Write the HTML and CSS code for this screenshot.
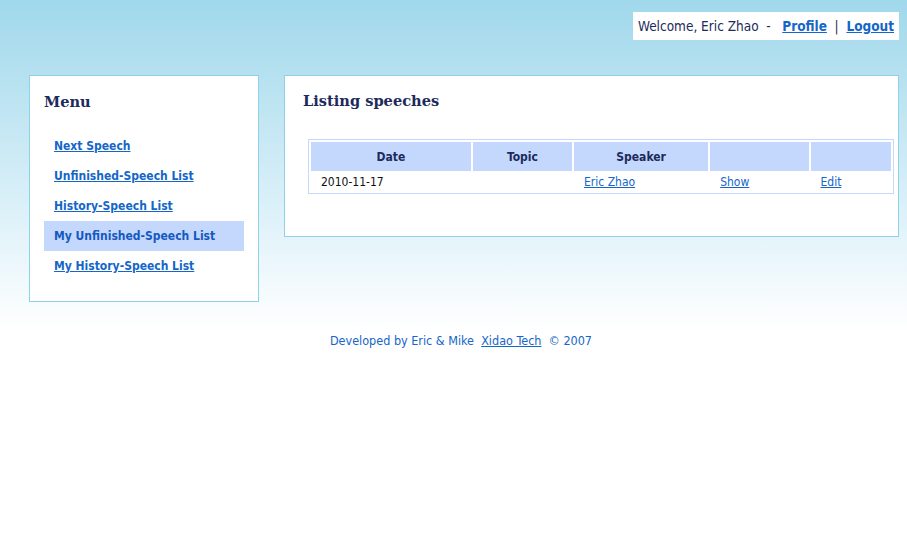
FILE: index.html
```html
<!DOCTYPE html>
<html>
<head>
<meta charset="utf-8">
<title>Listing speeches</title>
<link rel="stylesheet" href="styles.css">
</head>
<body>
<div class="page">
  <div class="topbar">
    <div class="userbox">Welcome, Eric Zhao &nbsp;-&nbsp; &nbsp;<a href="#">Profile</a>&nbsp; | &nbsp;<a href="#">Logout</a></div>
  </div>
  <div class="content">
    <div class="sidebar">
      <h2 class="box-title">Menu</h2>
      <ul class="menu">
        <li><a href="#">Next Speech</a></li>
        <li><a href="#">Unfinished-Speech List</a></li>
        <li><a href="#">History-Speech List</a></li>
        <li class="active"><a href="#">My Unfinished-Speech List</a></li>
        <li><a href="#">My History-Speech List</a></li>
      </ul>
    </div>
    <div class="main">
      <h2 class="box-title">Listing speeches</h2>
      <table class="list">
        <thead>
          <tr><th class="c1">Date</th><th class="c2">Topic</th><th class="c3">Speaker</th><th class="c4"></th><th class="c5"></th></tr>
        </thead>
        <tbody>
          <tr><td>2010-11-17</td><td></td><td><a href="#">Eric Zhao</a></td><td><a href="#">Show</a></td><td><a href="#">Edit</a></td></tr>
        </tbody>
      </table>
    </div>
  </div>
  <div class="footer">Developed by Eric &amp; Mike &nbsp;<a href="#">Xidao Tech</a> &nbsp;© 2007</div>
</div>
</body>
</html>
```
FILE: styles.css
```css
html, body {
  margin: 0;
  padding: 0;
}
body {
  background: #fff linear-gradient(to bottom, #a0d8eb 0px, #dff2f9 220px, #ffffff 330px) no-repeat;
  min-height: 557px;
  font-family: "DejaVu Sans Condensed", "DejaVu Sans", sans-serif;
  font-size: 12px;
  color: #111;
}
a {
  color: #1466c8;
}
.topbar {
  display: flex;
  justify-content: flex-end;
  padding: 12px 8px 0 0;
}
.userbox {
  background: #fff;
  height: 28px;
  line-height: 28px;
  padding: 0 5px;
  font-size: 13.5px;
  color: #1c2a5c;
}
.userbox a {
  font-weight: bold;
  color: #1466c8;
}
.content {
  display: flex;
  align-items: flex-start;
  gap: 25px;
  margin-top: 35px;
  padding-left: 29px;
}
.sidebar {
  width: 200px;
  height: 225px;
  background: #fff;
  border: 1px solid #8fd0ea;
  padding: 0 14px;
}
.main {
  width: 613px;
  height: 160px;
  background: #fff;
  border: 1px solid #8fd0ea;
}
.box-title {
  margin: 0;
  font-family: "DejaVu Serif", Georgia, serif;
  font-size: 14.6px;
  font-weight: bold;
  color: #1c2a5c;
}
.sidebar .box-title {
  padding-top: 17px;
  height: 24px;
}
.menu {
  list-style: none;
  margin: 14px 0 0;
  padding: 0;
}
.menu li {
  height: 30px;
  line-height: 31px;
  padding-left: 10px;
}
.menu li a {
  font-weight: bold;
  font-size: 12px;
}
.menu li.active {
  background: #c4d8fd;
}
.menu li.active a {
  text-decoration: none;
  color: #1458c0;
}
.main .box-title {
  padding: 16px 0 0 18px;
  height: 24px;
}
.list {
  margin: 23px 0 0 23px;
  width: 586px;
  border: 1px solid #c4d8fd;
  border-spacing: 2px;
  border-collapse: separate;
}
.list th {
  background: #c4d8fd;
  height: 29px;
  padding: 0;
  font-weight: bold;
  color: #1c2a5c;
  text-align: center;
}
.list td {
  height: 18px;
  padding: 0 0 0 10px;
  text-align: left;
  color: #111;
}
.c1 { width: 161px; }
.c2 { width: 100px; }
.c3 { width: 135px; }
.c4 { width: 99px; }
.c5 { width: 81px; }
.footer {
  margin-top: 31px;
  text-align: center;
  padding-left: 15px;
  color: #1466c8;
  font-size: 12.5px;
}
```
